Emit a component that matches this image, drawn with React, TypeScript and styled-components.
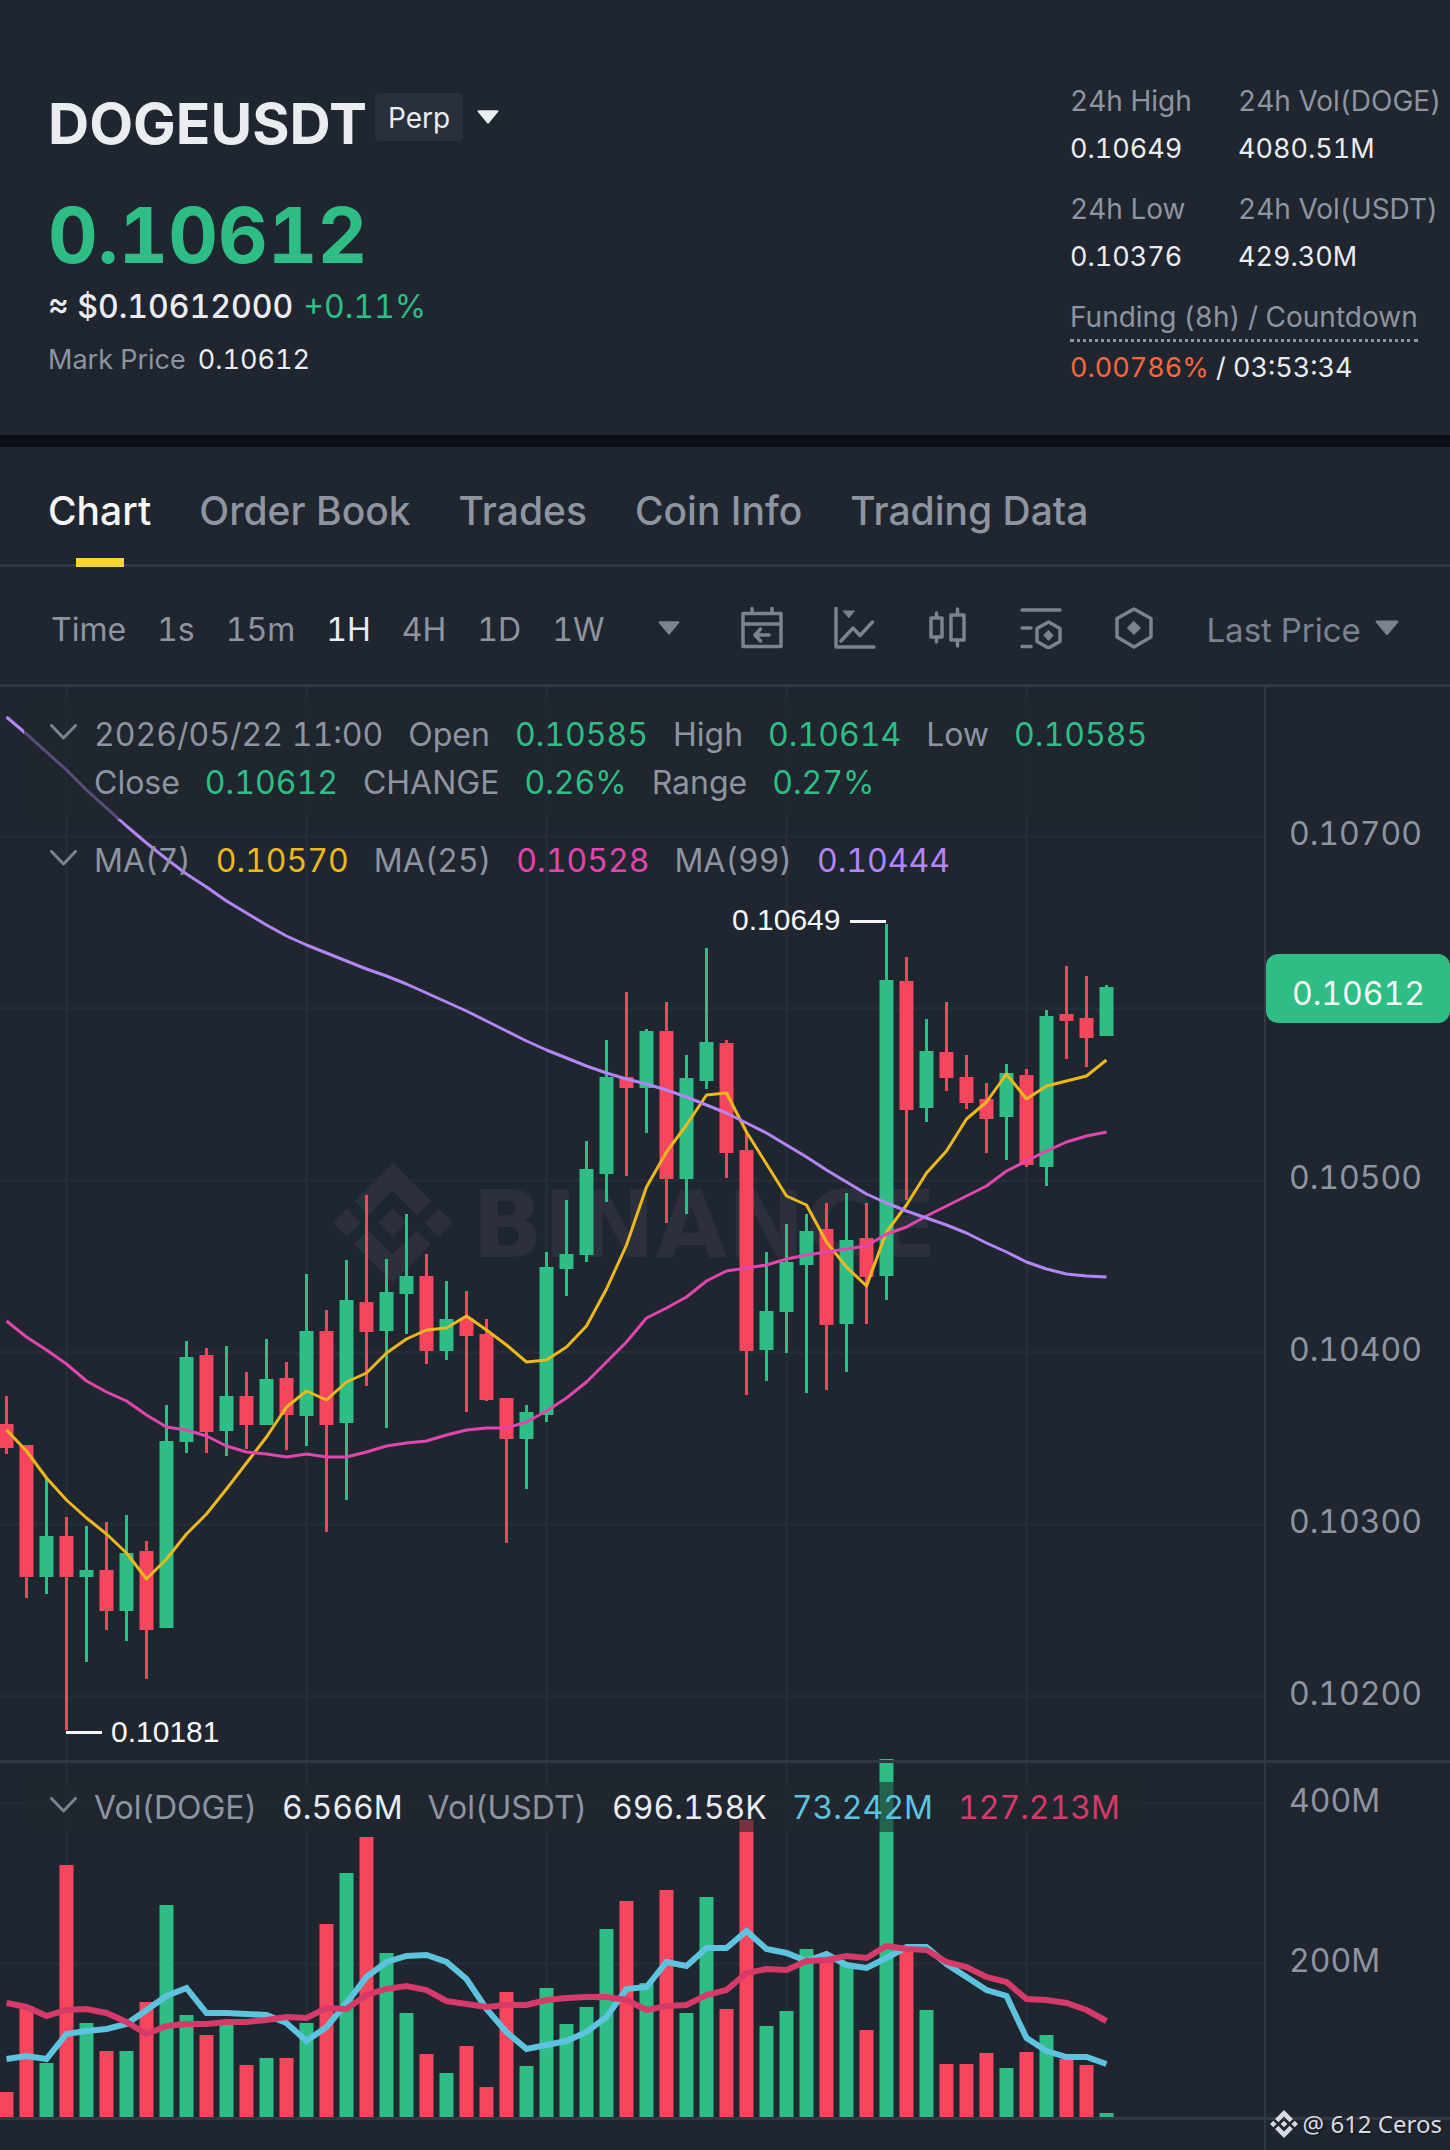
import React from "react";
import styled, { createGlobalStyle } from "styled-components";

const c = {
  bg: "#20262f",
  band: "#0b0e14",
  line: "#323843",
  grid: "#262c36",
  mark: "#2b303c",
  text: "#eaecef",
  bright: "#f5f6f8",
  muted: "#8e94a0",
  icon: "#7b8290",
  chip: "#292f3b",
  up: "#2ebd85",
  down: "#f6465d",
  yellow: "#fcd535",
  ma7: "#ecb81f",
  ma25: "#e046ae",
  ma99: "#b385f8",
  cyan: "#5ec3de",
  crimson: "#d63a69",
  orange: "#f6683f",
};

const GlobalStyle = createGlobalStyle`
  * { box-sizing: border-box; }
  body {
    margin: 0;
    background: ${c.bg};
    color: ${c.text};
    font-family: Inter, "Liberation Sans", sans-serif;
    font-variant-numeric: tabular-nums;
  }
  h1, dl, dt, dd, p { margin: 0; font-weight: inherit; }
  button, select {
    appearance: none;
    margin: 0;
    padding: 0;
    border: 0;
    background: none;
    color: inherit;
    font: inherit;
    font-variant-numeric: inherit;
    cursor: pointer;
  }
  svg { display: block; flex: none; }
`;

const Page = styled.main`
  position: relative;
  display: flex;
  flex-direction: column;
  min-height: 100vh;
`;

/* Header */

const Header = styled.header`
  display: flex;
  justify-content: space-between;
  align-items: flex-start;
  padding: 85px 0 51px 48px;
  border-bottom: 12px solid ${c.band};
`;

const Quote = styled.section`
  padding-top: 7px;
`;

const SymbolRow = styled.div`
  display: flex;
  align-items: flex-start;
`;

const Symbol = styled.h1`
  font-size: 57px;
  line-height: 64px;
  font-weight: 700;
`;

const Chip = styled.button`
  display: flex;
  align-items: center;
  gap: 14px;
  margin: 1px 0 0 8px;
`;

const ChipLabel = styled.span`
  padding: 2px 13px 0;
  border-radius: 4px;
  background: ${c.chip};
  font-size: 28px;
  line-height: 46px;
`;

const Price = styled.p`
  margin-top: 33px;
  color: ${c.up};
  font-size: 77px;
  line-height: 92px;
  font-weight: 700;
`;

const Fiat = styled.p`
  display: flex;
  gap: 10px;
  margin-top: 6px;
  font-size: 32px;
  line-height: 40px;
  font-weight: 500;
`;

const Change = styled.span`
  color: ${c.up};
  font-weight: 400;
`;

const MarkPrice = styled.p`
  display: flex;
  gap: 12px;
  margin-top: 16px;
  font-size: 27px;
  line-height: 34px;
`;

const Muted = styled.span`
  color: ${c.muted};
`;

const Stats = styled.dl`
  display: grid;
  grid-template-columns: 168px auto;
  row-gap: 28px;
  width: 380px;
  line-height: 32px;
  white-space: nowrap;
`;

const Stat = styled.div<{ $wide?: boolean }>`
  display: flex;
  flex-direction: column;
  align-items: flex-start;
  gap: ${(p) => (p.$wide ? 10 : 16)}px;
  grid-column: ${(p) => (p.$wide ? "1 / -1" : "auto")};
`;

const StatLabel = styled.dt<{ $dotted?: boolean }>`
  color: ${c.muted};
  font-size: 28px;
  padding-bottom: ${(p) => (p.$dotted ? 6 : 0)}px;
  border-bottom: ${(p) => (p.$dotted ? `3px dotted ${c.muted}` : "none")};
`;

const StatValue = styled.dd`
  font-size: 27px;
`;

const Rate = styled.span`
  color: ${c.orange};
`;

/* Tabs and toolbar */

const Tabs = styled.nav`
  display: flex;
  gap: 48px;
  padding: 0 48px;
  box-shadow: inset 0 -3px ${c.line};
`;

const Tab = styled.button<{ $active?: boolean }>`
  position: relative;
  height: 120px;
  padding-top: 8px;
  color: ${(p) => (p.$active ? c.bright : c.muted)};
  font-size: 39px;
  line-height: 48px;
  font-weight: 500;
  &::after {
    content: "";
    display: ${(p) => (p.$active ? "block" : "none")};
    position: absolute;
    left: calc(50% - 24px);
    bottom: 0;
    width: 48px;
    height: 9px;
    background: ${c.yellow};
  }
`;

const Toolbar = styled.div`
  display: flex;
  align-items: center;
  gap: 51px;
  height: 120px;
  padding: 5px 48px 0 51px;
  border-bottom: 3px solid ${c.line};
  color: ${c.muted};
  font-size: 33px;
  line-height: 40px;
`;

const Intervals = styled.div`
  display: flex;
  align-items: center;
  gap: 31px;
  padding-top: 4px;
  font-size: 32px;
`;

const Interval = styled.button<{ $active?: boolean }>`
  color: ${(p) => (p.$active ? c.text : "inherit")};
`;

const Tool = styled.button`
  color: ${c.icon};
`;

const MoreButton = styled(Tool)`
  margin: 0 10px 0 3px;
`;

const PriceType = styled.label`
  display: flex;
  align-items: center;
  gap: 14px;
  color: ${c.icon};
  select { padding-top: 4px; }
`;

/* Chart */

const Pane = styled.section`
  display: flex;
`;

const Plot = styled.div`
  position: relative;
  flex: 1;
  min-width: 0;
`;

const Drawing = styled.svg`
  width: 100%;
  overflow: visible;
`;

const Divider = styled.div`
  position: relative;
  z-index: 1;
  height: 3px;
  background: ${c.line};
`;

const Axis = styled.aside<{ $start?: number; $gap?: number }>`
  position: relative;
  display: flex;
  flex-direction: column;
  flex: none;
  gap: ${(p) => p.$gap ?? 0}px;
  width: 186px;
  padding-top: ${(p) => p.$start ?? 0}px;
  border-left: 2px solid ${c.line};
  color: ${c.muted};
  font-size: 32px;
  line-height: 40px;
`;

const Tick = styled.div`
  min-height: 40px;
  padding-left: 23px;
`;

const LastPrice = styled.div`
  position: absolute;
  top: 267px;
  left: 0;
  right: 0;
  padding: 10px 0 0 26px;
  border-radius: 12px;
  background: ${c.up};
  color: ${c.bright};
  line-height: 59px;
`;

const Legends = styled.div<{ $top: number }>`
  position: absolute;
  top: ${(p) => p.$top}px;
  left: 24px;
  display: flex;
  flex-direction: column;
  align-items: flex-start;
  gap: 18px;
  font-size: 32px;
  line-height: 48px;
`;

const Legend = styled.div<{ $shade?: boolean; $top: number; $bottom: number }>`
  display: flex;
  align-items: flex-start;
  gap: 17px;
  max-width: 1170px;
  padding: ${(p) => p.$top}px 24px ${(p) => p.$bottom}px 26px;
  background: ${(p) => (p.$shade ? "rgba(32, 38, 47, 0.6)" : "none")};
  color: ${c.muted};
  white-space: nowrap;
`;

const Fold = styled.button`
  padding-top: 13px;
  color: ${c.icon};
`;

const Items = styled.div`
  display: flex;
  flex-wrap: wrap;
  column-gap: 25px;
`;

const Value = styled.span<{ $color: string }>`
  color: ${(p) => p.$color};
`;

const Footer = styled.footer`
  display: flex;
  flex: 1;
  justify-content: flex-end;
  min-height: 30px;
`;

const Credit = styled.div`
  position: absolute;
  z-index: 2;
  right: 8px;
  bottom: 9px;
  display: flex;
  align-items: center;
  gap: 5px;
  color: #d8dbe1;
  font-family: "Noto Sans", sans-serif;
  font-size: 24px;
  line-height: 34px;
  text-shadow: 1px 1px 2px #10141a;
`;

/* Icons */

const Caret = ({ width, height }: { width: number; height: number }) => (
  <svg width={width} height={height} viewBox="0 0 22 14" fill="currentColor" stroke="currentColor" strokeWidth="2" strokeLinejoin="round">
    <path d="M1.5 1.2h19L11 12.6z" />
  </svg>
);

const Chevron = () => (
  <svg width="27" height="16" viewBox="0 0 27 16" fill="none" stroke="currentColor" strokeWidth="3" strokeLinecap="round" strokeLinejoin="round">
    <path d="M1.5 1.5 13.5 14l12-12.5" />
  </svg>
);

const ToolIcon = ({ children }: { children: React.ReactNode }) => (
  <svg width="42" height="42" viewBox="0 0 42 42" fill="none" stroke="currentColor" strokeWidth="3.5" strokeLinecap="round" strokeLinejoin="round">
    {children}
  </svg>
);

const CalendarIcon = () => (
  <ToolIcon>
    <path d="M11 1.5V6M31 1.5V6M2 6.5h38v33H2zM2 17h38M28 28H14M19.500 22 14 28l5.500 6" />
  </ToolIcon>
);

const IndicatorIcon = () => (
  <ToolIcon>
    <path d="M2 1.500V40h38M7 34 19 21l7 7.500L38.500 15" />
    <path d="M9.500 4h11L15 10.500z" fill="currentColor" strokeWidth="1" />
  </ToolIcon>
);

const CandlesIcon = () => (
  <ToolIcon>
    <path d="M4 11h11v19H4zM9.500 6v5M9.500 30v5M24 8h13v25H24zM30.500 2v6M30.500 33v6" />
  </ToolIcon>
);

const ListIcon = () => (
  <ToolIcon>
    <path d="M2 3h38M2 21h9M2 39.500h9M28.500 15l11.500 6.500v13L28.500 41 17 34.500v-13z" />
    <path d="M28.500 23.500l4.500 5-4.500 5-4.500-5z" fill="currentColor" strokeWidth="1" />
  </ToolIcon>
);

const HexIcon = () => (
  <ToolIcon>
    <path d="M21 2l17 9.500v18.500L21 40 4 30V11.500z" />
    <path d="M21 14.500l6.500 6.500-6.500 6.500-6.500-6.500z" fill="currentColor" strokeWidth="1" />
  </ToolIcon>
);

const logoPath =
  "M38.200 53.200 60 31.400l21.800 21.800 12.700-12.700L60 6 25.500 40.500zM6 60l12.700-12.700L31.400 60 18.700 72.700zM38.200 66.800 60 88.600l21.800-21.800 12.700 12.700L60 114 25.500 79.500zM88.600 60l12.700-12.700L114 60l-12.700 12.700zM72.900 60 60 47.100 47.100 60 60 72.900z";

/* Series: one entry per hour, in plot coordinates */

type Candle = [up: 0 | 1, high: number, top: number, bottom: number, low: number];

const candles: Candle[] = [
  [0, 1396, 1424, 1448, 1454], [0, 1445, 1445, 1577, 1598], [1, 1477, 1536, 1577, 1594], [0, 1517, 1536, 1577, 1730],
  [1, 1526, 1570, 1577, 1662], [0, 1522, 1570, 1611, 1630], [1, 1515, 1553, 1611, 1641], [0, 1541, 1551, 1630, 1679],
  [1, 1405, 1441, 1628, 1628], [1, 1341, 1357, 1442, 1453], [0, 1348, 1355, 1432, 1453], [1, 1346, 1396, 1431, 1456],
  [0, 1372, 1396, 1425, 1449], [1, 1339, 1379, 1425, 1425], [0, 1362, 1378, 1415, 1450], [1, 1274, 1331, 1416, 1446],
  [0, 1310, 1331, 1425, 1532], [1, 1260, 1300, 1423, 1500], [0, 1195, 1302, 1332, 1386], [1, 1259, 1292, 1331, 1428],
  [1, 1214, 1276, 1294, 1334], [0, 1254, 1276, 1351, 1364], [1, 1281, 1319, 1351, 1360], [0, 1291, 1318, 1336, 1412],
  [0, 1319, 1334, 1400, 1401], [0, 1398, 1398, 1439, 1543], [1, 1405, 1412, 1439, 1489], [1, 1252, 1267, 1415, 1422],
  [1, 1200, 1254, 1269, 1296], [1, 1141, 1169, 1255, 1262], [1, 1040, 1077, 1174, 1202], [0, 992, 1077, 1088, 1176],
  [1, 1029, 1031, 1088, 1133], [0, 1002, 1031, 1179, 1223], [1, 1055, 1078, 1179, 1214], [1, 948, 1042, 1081, 1089],
  [0, 1040, 1043, 1153, 1178], [0, 1132, 1150, 1351, 1395], [1, 1252, 1311, 1350, 1381], [1, 1224, 1262, 1312, 1353],
  [1, 1214, 1231, 1265, 1393], [0, 1203, 1229, 1325, 1390], [1, 1193, 1240, 1324, 1372], [0, 1203, 1238, 1277, 1324],
  [1, 924, 980, 1276, 1300], [0, 957, 981, 1110, 1200], [1, 1019, 1051, 1108, 1122], [0, 1002, 1052, 1078, 1091],
  [0, 1055, 1077, 1103, 1109], [0, 1083, 1099, 1119, 1153], [1, 1064, 1073, 1117, 1160], [0, 1069, 1075, 1165, 1167],
  [1, 1010, 1016, 1167, 1186], [0, 966, 1014, 1021, 1059], [0, 976, 1018, 1038, 1067], [1, 985, 987, 1036, 1036],
];

const ma7 = [
  1430, 1451, 1478, 1500, 1518, 1534, 1553, 1579, 1559, 1534, 1514, 1489, 1463, 1437, 1407, 1391, 1400, 1382, 1373,
  1353, 1339, 1330, 1328, 1316, 1330, 1345, 1362, 1360, 1347, 1326, 1289, 1245, 1187, 1152, 1125, 1095, 1093, 1132,
  1164, 1196, 1205, 1242, 1267, 1286, 1232, 1205, 1173, 1151, 1119, 1102, 1074, 1099, 1086, 1081, 1076, 1060,
];

const ma25 = [
  1321, 1337, 1350, 1364, 1381, 1392, 1401, 1415, 1427, 1430, 1436, 1446, 1452, 1454, 1457, 1454, 1457, 1457, 1452,
  1446, 1443, 1441, 1435, 1430, 1428, 1428, 1422, 1411, 1398, 1382, 1362, 1342, 1318, 1308, 1297, 1281, 1271, 1268,
  1265, 1259, 1255, 1252, 1249, 1246, 1234, 1227, 1216, 1206, 1196, 1186, 1171, 1161, 1151, 1142, 1136, 1132,
];

const ma99 = [
  717, 734, 752, 770, 790, 808, 826, 843, 859, 874, 887, 901, 913, 925, 936, 945, 953, 961, 969, 976, 984, 993, 1002,
  1011, 1021, 1031, 1041, 1050, 1058, 1066, 1073, 1079, 1084, 1090, 1097, 1105, 1113, 1123, 1133, 1145, 1157, 1170,
  1182, 1194, 1203, 1211, 1218, 1225, 1233, 1243, 1252, 1262, 1269, 1274, 1276, 1277,
];

const volumes = [
  2092, 2006, 2063, 1865, 2023, 2051, 2051, 2002, 1905, 2015, 2035, 2023, 2065, 2058, 2058, 2023, 1924, 1873, 1837,
  1953, 2013, 2054, 2073, 2046, 2087, 1992, 2066, 1988, 2024, 2007, 1929, 1901, 1983, 1890, 2013, 1897, 2009, 1820,
  2026, 2011, 1949, 1960, 1963, 2030, 1759, 1948, 2010, 2064, 2064, 2053, 2068, 2052, 2035, 2059, 2065, 2113,
];

const volumeFast = [
  2059, 2056, 2059, 2034, 2031, 2029, 2024, 2010, 1996, 1988, 2013, 2013, 2014, 2015, 2023, 2041, 2027, 2003, 1977,
  1962, 1956, 1955, 1962, 1979, 2009, 2032, 2049, 2045, 2041, 2032, 2017, 1989, 1987, 1962, 1966, 1948, 1948, 1931,
  1949, 1953, 1961, 1954, 1965, 1968, 1958, 1947, 1947, 1964, 1977, 1990, 1996, 2038, 2051, 2057, 2057, 2064,
];

const volumeSlow = [
  2003, 2007, 2016, 2010, 2009, 2013, 2022, 2034, 2026, 2024, 2024, 2022, 2022, 2020, 2017, 2018, 2008, 2009, 1995,
  1989, 1986, 1990, 2001, 2004, 2007, 2005, 2005, 2000, 1998, 1997, 1997, 2000, 2010, 2006, 2005, 1995, 1990, 1973,
  1969, 1970, 1961, 1960, 1956, 1958, 1946, 1949, 1950, 1962, 1967, 1977, 1982, 1999, 2000, 2003, 2010, 2021,
];

const centerX = (i: number) => 6.5 + i * 20;
const hourLines = [3, 15, 27, 39, 51].map((i) => centerX(i));

const Line = ({ values, color, width }: { values: number[]; color: string; width: number }) => (
  <polyline
    points={values.map((y, i) => `${centerX(i)},${y}`).join(" ")}
    fill="none"
    stroke={color}
    strokeWidth={width}
    strokeLinejoin={width > 3 ? "miter" : "round"}
  />
);

const Grid = ({ rows, top, bottom }: { rows: number[]; top: number; bottom: number }) => (
  <g stroke={c.grid} strokeWidth="3">
    {rows.map((y) => (
      <line key={y} x1="0" x2="1264" y1={y} y2={y} />
    ))}
    {hourLines.map((x) => (
      <line key={x} x1={x} x2={x} y1={top} y2={bottom} />
    ))}
  </g>
);

const PriceDrawing = () => (
  <Drawing height="1073" viewBox="0 687 1264 1073" preserveAspectRatio="xMinYMin slice" role="img" aria-label="Candlestick chart">
    <Grid rows={[836.5, 1008.5, 1180.5, 1352.5, 1524.5, 1696.5]} top={687} bottom={1760} />
    <g fill={c.mark}>
      <path d={logoPath} transform="translate(326 1156) scale(1.11)" />
      <text x="472" y="1257" fontFamily="DejaVu Sans, sans-serif" fontSize="93" fontWeight="700">BINANCE</text>
    </g>
    {candles.map(([up, high, top, bottom, low], i) => (
      <g key={i} fill={up ? c.up : c.down}>
        <rect x={centerX(i) - 1.5} y={high} width="3" height={low - high} />
        <rect x={centerX(i) - 7} y={top} width="14" height={bottom - top} />
      </g>
    ))}
    <Line values={ma7} color={c.ma7} width={3} />
    <Line values={ma25} color={c.ma25} width={3} />
    <Line values={ma99} color={c.ma99} width={3} />
    <g stroke={c.bright} strokeWidth="3">
      <line x1="850" x2="886" y1="921.5" y2="921.5" />
      <line x1="66" x2="102" y1="1732.5" y2="1732.5" />
    </g>
    <g fill={c.bright} fontFamily="Liberation Sans, Arial, sans-serif" fontSize="30">
      <text x="732" y="930">0.10649</text>
      <text x="111" y="1742">0.10181</text>
    </g>
  </Drawing>
);

const VolumeDrawing = () => (
  <Drawing height="354" viewBox="0 1763 1264 354" preserveAspectRatio="xMinYMin slice" role="img" aria-label="Volume chart">
    <Grid rows={[1803.5, 1963.5]} top={1763} bottom={2117} />
    {volumes.map((y, i) => (
      <rect key={i} x={centerX(i) - 7} y={y} width="14" height={2117 - y} fill={candles[i][0] ? c.up : c.down} />
    ))}
    <Line values={volumeFast} color={c.cyan} width={6} />
    <Line values={volumeSlow} color={c.crimson} width={6} />
  </Drawing>
);

type Item = [text: string, color?: string];

type LegendRowProps = { label: string; items: Item[]; shade?: boolean; top?: number; bottom?: number };

const LegendRow = ({ label, items, shade, top = 0, bottom = 0 }: LegendRowProps) => (
  <Legend $shade={shade} $top={top} $bottom={bottom}>
    <Fold aria-label={label}>
      <Chevron />
    </Fold>
    <Items>
      {items.map(([text, color], i) => (
        <Value key={i} $color={color ?? "inherit"}>
          {text}
        </Value>
      ))}
    </Items>
  </Legend>
);

export default function App() {
  return (
    <>
      <GlobalStyle />
      <Page>
        <Header>
          <Quote>
            <SymbolRow>
              <Symbol>DOGEUSDT</Symbol>
              <Chip>
                <ChipLabel>Perp</ChipLabel>
                <Caret width={22} height={14} />
              </Chip>
            </SymbolRow>
            <Price>0.10612</Price>
            <Fiat>
              <span>≈ $0.10612000</span>
              <Change>+0.11%</Change>
            </Fiat>
            <MarkPrice>
              <Muted>Mark Price</Muted>
              <span>0.10612</span>
            </MarkPrice>
          </Quote>
          <Stats>
            <Stat>
              <StatLabel>24h High</StatLabel>
              <StatValue>0.10649</StatValue>
            </Stat>
            <Stat>
              <StatLabel>24h Vol(DOGE)</StatLabel>
              <StatValue>4080.51M</StatValue>
            </Stat>
            <Stat>
              <StatLabel>24h Low</StatLabel>
              <StatValue>0.10376</StatValue>
            </Stat>
            <Stat>
              <StatLabel>24h Vol(USDT)</StatLabel>
              <StatValue>429.30M</StatValue>
            </Stat>
            <Stat $wide>
              <StatLabel $dotted>Funding (8h) / Countdown</StatLabel>
              <StatValue>
                <Rate>0.00786%</Rate> / 03:53:34
              </StatValue>
            </Stat>
          </Stats>
        </Header>

        <Tabs>
          {["Chart", "Order Book", "Trades", "Coin Info", "Trading Data"].map((name) => (
            <Tab key={name} $active={name === "Chart"}>
              {name}
            </Tab>
          ))}
        </Tabs>

        <Toolbar>
          <Intervals>
            {["Time", "1s", "15m", "1H", "4H", "1D", "1W"].map((name) => (
              <Interval key={name} $active={name === "1H"}>
                {name}
              </Interval>
            ))}
          </Intervals>
          <MoreButton aria-label="More intervals">
            <Caret width={22} height={14} />
          </MoreButton>
          <Tool aria-label="Go to date"><CalendarIcon /></Tool>
          <Tool aria-label="Indicators"><IndicatorIcon /></Tool>
          <Tool aria-label="Chart type"><CandlesIcon /></Tool>
          <Tool aria-label="Display settings"><ListIcon /></Tool>
          <Tool aria-label="Chart settings"><HexIcon /></Tool>
          <PriceType>
            <select aria-label="Price type">
              <option>Last Price</option>
            </select>
            <Caret width={24} height={16} />
          </PriceType>
        </Toolbar>

        <Pane>
          <Plot>
            <PriceDrawing />
            <Legends $top={12}>
              <LegendRow
                label="Toggle candle values"
                shade
                top={12}
                bottom={12}
                items={[
                  ["2026/05/22 11:00"],
                  ["Open"], ["0.10585", c.up],
                  ["High"], ["0.10614", c.up],
                  ["Low"], ["0.10585", c.up],
                  ["Close"], ["0.10612", c.up],
                  ["CHANGE"], ["0.26%", c.up],
                  ["Range"], ["0.27%", c.up],
                ]}
              />
              <LegendRow
                label="Toggle moving averages"
                items={[
                  ["MA(7)"], ["0.10570", c.ma7],
                  ["MA(25)"], ["0.10528", c.ma25],
                  ["MA(99)"], ["0.10444", c.ma99],
                ]}
              />
            </Legends>
          </Plot>
          <Axis $start={127} $gap={132}>
            <Tick>0.10700</Tick>
            <Tick />
            <Tick>0.10500</Tick>
            <Tick>0.10400</Tick>
            <Tick>0.10300</Tick>
            <Tick>0.10200</Tick>
            <LastPrice>0.10612</LastPrice>
          </Axis>
        </Pane>

        <Divider />

        <Pane>
          <Plot>
            <VolumeDrawing />
            <Legends $top={19}>
              <LegendRow
                label="Toggle volume"
                shade
                top={2}
                items={[
                  ["Vol(DOGE)"], ["6.566M", c.text],
                  ["Vol(USDT)"], ["696.158K", c.text],
                  ["73.242M", c.cyan],
                  ["127.213M", c.crimson],
                ]}
              />
            </Legends>
          </Plot>
          <Axis $start={18} $gap={120}>
            <Tick>400M</Tick>
            <Tick>200M</Tick>
          </Axis>
        </Pane>

        <Divider />

        <Footer>
          <Axis />
        </Footer>

        <Credit>
          <svg width="28" height="28" viewBox="6 6 108 108" fill="currentColor">
            <path d={logoPath} />
          </svg>
          <span>@ 612 Ceros</span>
        </Credit>
      </Page>
    </>
  );
}
